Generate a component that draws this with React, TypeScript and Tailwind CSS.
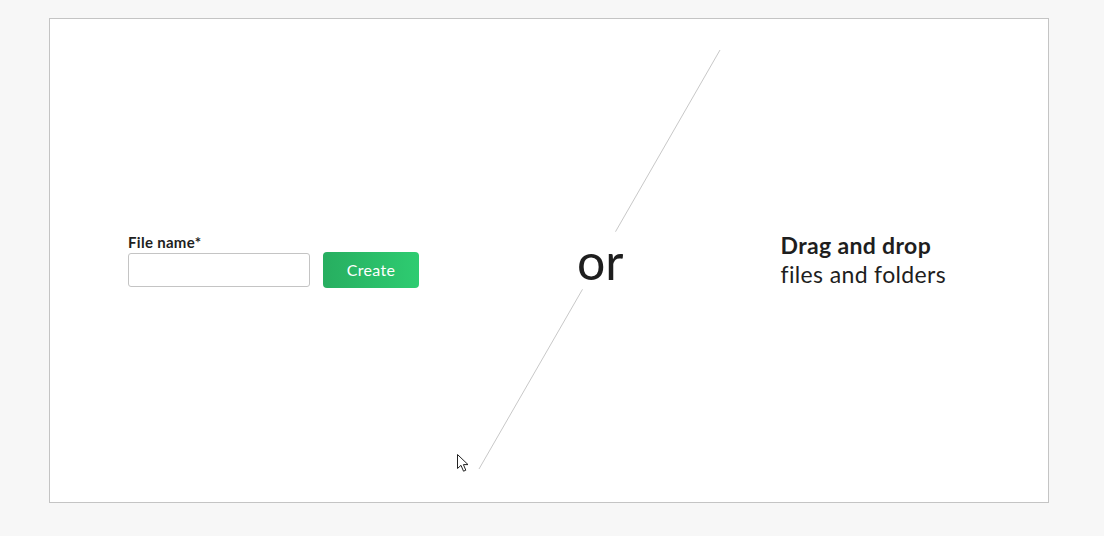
export default function App() {
  return (
    <div className="min-h-[536px] w-full bg-[#f7f7f7] pt-[18px] pl-[49px]" style={{ fontFamily: "Lato, 'Open Sans', sans-serif" }}>
      <div className="relative flex h-[485px] w-[1000px] items-center border border-[#c4c4c4] bg-white text-[#1e1e1e]">
        {/* diagonal divider */}
        <svg className="pointer-events-none absolute left-0 top-0" width="998" height="483" viewBox="0 0 998 483">
          <line x1="670" y1="31" x2="565.5" y2="212.7" stroke="#c8c8c8" strokeWidth="1" />
          <line x1="532.5" y1="270.3" x2="429" y2="450" stroke="#c8c8c8" strokeWidth="1" />
        </svg>

        {/* mouse cursor */}
        <svg className="pointer-events-none absolute left-[407px] top-[435px]" width="14" height="20" viewBox="0 0 14 20">
          <path d="M0.5 0.5 L0.5 14.5 L4 11.3 L6.5 17.2 L8.8 16.2 L6.4 10.6 L11 10.6 Z" fill="#fff" stroke="#222" strokeWidth="1" strokeLinejoin="miter" />
        </svg>

        {/* create form */}
        <div className="ml-[78px] flex flex-col">
          <label className="text-[15px] font-bold leading-[17px] tracking-[0.3px]">File name*</label>
          <div className="mt-[1px] flex items-center gap-[13px]">
            <input type="text" className="h-[34px] w-[182px] rounded-[3px] border border-[#c4c4c4] bg-white px-2 outline-none" />
            <button className="h-[36px] w-[96px] rounded-[4px] bg-gradient-to-r from-[#27ae60] to-[#2ecc71] pt-[1px] text-[16px] tracking-[0.3px] text-white">
              Create
            </button>
          </div>
        </div>

        {/* or */}
        <div className="relative z-10 ml-[158px] text-[50px] leading-none">or</div>

        {/* drag and drop */}
        <div className="mb-[2px] ml-[157px] flex flex-col text-[23px] leading-[29px] tracking-[0.35px]">
          <span className="font-bold">Drag and drop</span>
          <span>files and folders</span>
        </div>
      </div>
    </div>
  );
}
